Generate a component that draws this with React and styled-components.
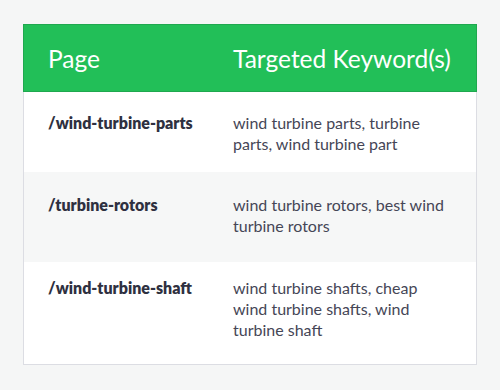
import React from 'react';
import styled, { createGlobalStyle } from 'styled-components';

const GlobalStyle = createGlobalStyle`
  html, body {
    margin: 0;
    padding: 0;
    background: #f5f6f6;
  }
  body {
    font-family: Lato, "Open Sans", sans-serif;
  }
`;

const Page = styled.div`
  width: 500px;
  height: 390px;
  padding: 24px 23px 0 23px;
  box-sizing: border-box;
`;

const Card = styled.div`
  width: 454px;
  background: #ffffff;
  border: 1px solid #dcdde3;
  border-top: none;
  box-sizing: border-box;
`;

const HeaderRow = styled.div`
  display: grid;
  grid-template-columns: 185px 1fr;
  height: 68px;
  align-items: center;
  padding: 0 24px;
  margin: 0 -1px;
  background: #22bf58;
  border: 1px solid #1fa84f;
  color: #ffffff;
  font-size: 24.5px;
  font-weight: 400;
  white-space: nowrap;
  box-sizing: border-box;
`;

const Row = styled.div`
  display: grid;
  grid-template-columns: 185px 212px;
  padding: ${(p) => p.$top}px 24px 0 24px;
  height: ${(p) => p.$height}px;
  box-sizing: border-box;
  background: ${(p) => (p.$shaded ? '#f6f7f7' : '#ffffff')};
  font-size: 16px;
  line-height: 21px;
`;

const PageCell = styled.div`
  font-weight: 800;
  color: #2e3040;
`;

const KeywordCell = styled.div`
  color: #454656;
`;

const rows = [
  { page: '/wind-turbine-parts', keywords: 'wind turbine parts, turbine parts, wind turbine part', top: 20, height: 80 },
  { page: '/turbine-rotors', keywords: 'wind turbine rotors, best wind turbine rotors', top: 22, height: 90, shaded: true },
  { page: '/wind-turbine-shaft', keywords: 'wind turbine shafts, cheap wind turbine shafts, wind turbine shaft', top: 15, height: 102 },
];

export default function App() {
  return (
    <>
      <GlobalStyle />
      <Page>
        <Card>
          <HeaderRow>
            <div>Page</div>
            <div>Targeted Keyword(s)</div>
          </HeaderRow>
          {rows.map((row) => (
            <Row key={row.page} $top={row.top} $height={row.height} $shaded={row.shaded}>
              <PageCell>{row.page}</PageCell>
              <KeywordCell>{row.keywords}</KeywordCell>
            </Row>
          ))}
        </Card>
      </Page>
    </>
  );
}
